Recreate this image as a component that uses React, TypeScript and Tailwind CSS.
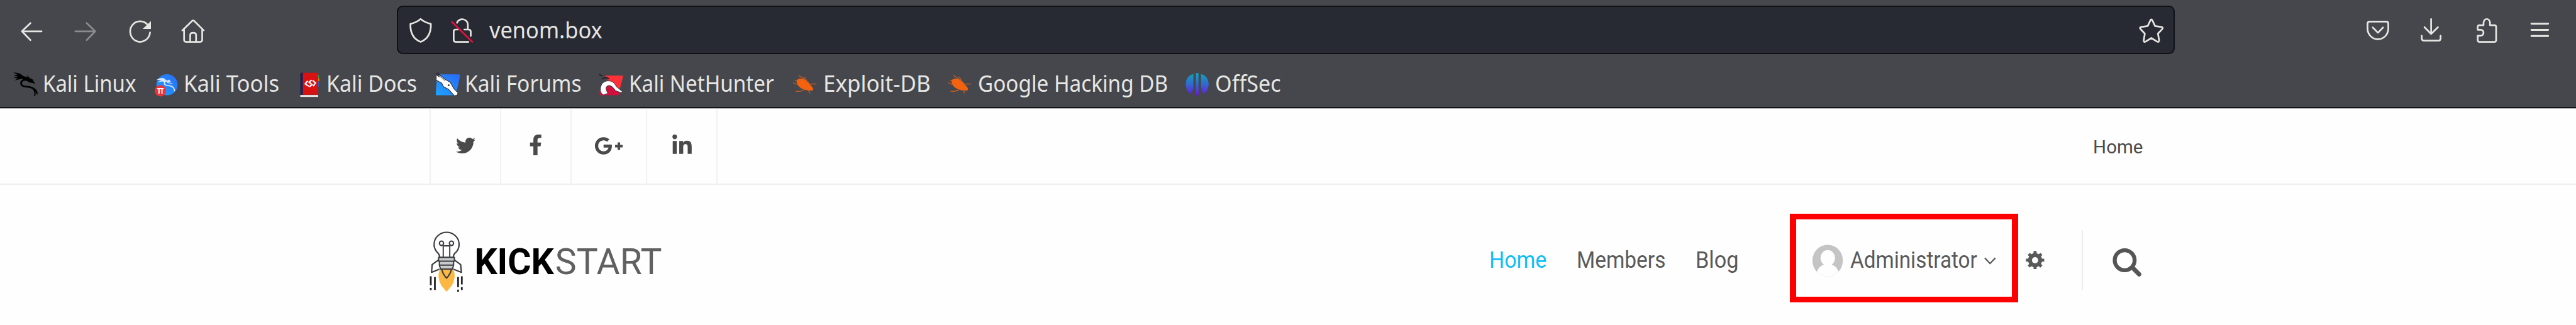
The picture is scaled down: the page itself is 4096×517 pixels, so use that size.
import type { ReactNode } from "react";
import { FaFacebookF, FaGooglePlusG, FaLinkedinIn, FaTwitter } from "react-icons/fa";

const line = {
  fill: "none",
  stroke: "#e6e6e2",
  strokeWidth: 2.9,
  strokeLinecap: "round" as const,
  strokeLinejoin: "round" as const,
};

function BackIcon() {
  return (
    <svg viewBox="0 21 96 60" className="h-[55.9px] w-[89.4px]">
      <path {...line} d="M71 53H37.5M52 39L37.5 53L52 68" />
    </svg>
  );
}

function ForwardIcon() {
  return (
    <svg viewBox="96 21 96 60" className="h-[55.9px] w-[89.4px]">
      <path {...line} stroke="#8a8b8e" d="M129 53H163M148.500 39L163 53L148.500 68" />
    </svg>
  );
}

function ReloadIcon() {
  return (
    <svg viewBox="192 21 96 60" className="h-[55.9px] w-[89.4px]">
      <path {...line} d="M252 42A17 17.500 0 1 0 256 55" />
      <path fill="#e6e6e2" d="M257.500 35.500V49H243.500Z" />
    </svg>
  );
}

function HomeIcon() {
  return (
    <svg viewBox="288 21 96 60" className="h-[55.9px] w-[89.4px]">
      <path {...line} d="M311.500 51.500L328 35.500Q330 33.500 332 35.500L348 51.500M314.500 50V67.500Q314.500 71 318 71H342Q345.500 71 345.500 67.500V50M325 71V59.500Q325 55.500 330 55.500Q335 55.500 335 59.500V71" />
    </svg>
  );
}

function ShieldIcon() {
  return (
    <svg viewBox="680 21 75 60" className="h-[55.9px] w-[69.8px]">
      <path {...line} d="M718.500 32Q725 37.500 736 40.500Q736.500 64 718.500 71Q700.500 64 701 40.500Q712 37.500 718.500 32Z" />
    </svg>
  );
}

function InsecureIcon() {
  return (
    <svg viewBox="755 21 75 60" className="h-[55.9px] w-[69.8px]">
      <path {...line} d="M781.500 38.500A9.500 9 0 0 1 800 41.500V50M783 50H779Q775.800 50 775.800 53.500V67.500Q775.800 71 779 71H801M794 50H801Q805 50 805 54V61" />
      <path {...line} stroke="#e2133f" d="M773 37L807.500 71" />
    </svg>
  );
}

function StarIcon() {
  return (
    <svg viewBox="3645 21 60 60" className="h-[55.9px] w-[55.9px]">
      <path {...line} d="M3672 34.500Q3673.800 31 3675.600 34.500L3680 44L3690.500 45.500Q3695 46.500 3692 49.500L3685 57L3687 68Q3687 72.500 3683.500 70.500L3673.800 64.500L3664 70.500Q3660.500 72.500 3660.800 68L3662.600 57L3655.500 49.500Q3652.500 46.500 3657 45.500L3667.500 44Z" />
    </svg>
  );
}

function PocketIcon() {
  return (
    <svg viewBox="4015 21 92 60" className="h-[55.9px] w-[85.6px]">
      <path {...line} d="M4047 36.500H4075.500Q4079 36.500 4079 40V49.500A17.800 18.500 0 0 1 4043.500 49.500V40Q4043.500 36.500 4047 36.500ZM4052.500 46.500L4061.300 55.500L4070 46.500" />
    </svg>
  );
}

function DownloadIcon() {
  return (
    <svg viewBox="4107 21 92 60" className="h-[55.9px] w-[85.6px]">
      <path {...line} d="M4152.800 32V57.500M4141.500 46L4152.800 57.500L4164.500 46M4136.800 60.500V65Q4136.800 69 4140.800 69H4165Q4169 69 4169 65V60.500" />
    </svg>
  );
}

function ExtensionIcon() {
  return (
    <svg viewBox="4199 21 92 60" className="h-[55.9px] w-[85.6px]">
      <path {...line} d="M4235 42.500H4242V37.500Q4243.500 32 4247.500 32Q4251.500 32 4253 37.500V42.500H4260.500Q4263.500 42.500 4263.500 45.500V68Q4263.500 71 4260.500 71H4235Q4232 71 4232 68V60.500H4237.500A5.500 5.200 0 0 0 4237.500 50.300H4232V45.500Q4232 42.500 4235 42.500Z" />
    </svg>
  );
}

function MenuIcon() {
  return (
    <svg viewBox="4291 21 92 60" className="h-[55.9px] w-[85.6px]">
      <path {...line} strokeWidth={3.2} d="M4324.500 40H4353M4324.500 50.600H4353M4324.500 61H4353" />
    </svg>
  );
}

function KaliDragon() {
  return (
    <svg viewBox="38 21 148.800 180" className="h-[55.9px] w-[46.2px]">
      <path d="M38 55Q68 53 84 68Q92 76 100 76L112 80L107 68L124 84L138 90L151 114L138 108L120 105Q104 92 94 98L84 86Q66 90 44 95Q58 86 68 84Q52 86 42 80Q56 77 64 75Q48 72 40 66Q52 67 60 65Q50 60 38 55Z" />
      <path fill="none" stroke="#000" strokeWidth="9" d="M92 92C72 102 74 123 98 126C126 128 148 132 159 158" />
      <path fill="none" stroke="#000" strokeWidth="6" d="M138 136Q154 150 148 176M152 142L162 166" />
    </svg>
  );
}

function KaliTools() {
  return (
    <svg viewBox="762 21 148.800 180" className="h-[55.9px] w-[46.2px]">
      <defs>
        <linearGradient id="tools" x1="1" y1="0" x2="0" y2="1">
          <stop offset="0" stopColor="#2a6df4" />
          <stop offset="1" stopColor="#1fa0ff" />
        </linearGradient>
      </defs>
      <circle cx="825" cy="117" r="54" fill="url(#tools)" />
      <path fill="#d6e6ff" d="M772 92Q796 76 812 86L824 96L836 90L846 104L828 104Q816 98 812 106L802 100L776 104Q788 98 796 94Z" />
      <path fill="none" stroke="#d6e6ff" strokeWidth="6" d="M814 100C806 118 822 122 838 122Q862 126 864 150" />
      <path fill="none" stroke="#b9d7ff" strokeWidth="4" d="M826 106L854 112" />
      <circle cx="791" cy="148" r="29" fill="#ee3338" />
      <path fill="none" stroke="#fff" strokeWidth="6.500" d="M774 137H808M784 137V163M799 137V163" />
    </svg>
  );
}

function KaliDocs() {
  return (
    <svg viewBox="512.500 112 45.100 60" className="h-[55.9px] w-[42px]">
      <path fill="#24a148" d="M542 127H545V133H542Z" />
      <path fill="#e07b1a" d="M542 133H545.500V138H542Z" />
      <path fill="#2c62c9" d="M542 139H545V147H542Z" />
      <path fill="#1b2152" d="M515 123.500H520V161H513V126Q513 123.500 515 123.500Z" />
      <path fill="#d81212" d="M517.500 123.500H541Q543.500 123.500 543.500 126V161H517.500Z" />
      <path fill="#e9e4e4" d="M513 161.500H543.500V164.800H513Z" />
      <path fill="none" stroke="#fff" strokeWidth="2.400" d="M525.500 137.500L521.500 142.500L527.500 146.500M534 136.500L539 141L535 146.500M532.500 136L528 139.500L533 144L528.500 147.500" />
    </svg>
  );
}

function KaliForums() {
  return (
    <svg viewBox="249 336 153.300 180" className="h-[55.9px] w-[47.6px]">
      <defs>
        <linearGradient id="forums" x1="1" y1="0" x2="0" y2="1">
          <stop offset="0" stopColor="#2a69f6" />
          <stop offset="1" stopColor="#1da4ff" />
        </linearGradient>
      </defs>
      <path fill="url(#forums)" d="M275 379H370Q378 379 376 388L356 478Q354 486 345 486H260Q251 486 252 476L258 390Z" />
      <path fill="#fff" stroke="#2a2a30" strokeWidth="3.500" strokeLinejoin="round" d="M254 380L270 392L264 374L300 404L326 420L337 438Q344 456 366 472L362 486L346 488L334 474L318 456L292 442L282 424L254 408Z" />
      <path fill="none" stroke="#2a2a30" strokeWidth="8" d="M258 372L276 388" />
      <path fill="none" stroke="#9a9a9e" strokeWidth="6" d="M268 384L300 412" />
      <circle cx="318" cy="434" r="5" fill="#444" />
    </svg>
  );
}

function KaliNetHunter() {
  return (
    <svg viewBox="1089 336 155 180" className="h-[55.9px] w-[48.1px]">
      <path fill="#ff3038" d="M1122 385H1207Q1215 385 1213 393L1194 466L1150 430Z" />
      <path fill="#d3103c" d="M1094 462L1130 430L1200 470L1190 486H1102Q1088 486 1094 462Z" />
      <path fill="none" stroke="#222226" strokeWidth="6" d="M1092 379L1108 387M1106 404Q1124 388 1142 402" />
      <path fill="#fff" stroke="#333338" strokeWidth="3" d="M1098 464Q1094 420 1132 412Q1164 408 1180 442L1210 467L1204 473L1174 462Q1158 434 1138 436Q1116 444 1136 476L1114 484Q1100 478 1098 464Z" />
    </svg>
  );
}

function BugIcon({ className }: { className: string }) {
  return (
    <svg viewBox="44 6 154 180" className={className}>
      <path fill="#f2620f" d="M64 78Q78 64 104 75L122 88L132 102L148 122L142 133L124 131Q100 130 80 116Q58 98 64 78Z" />
      <path fill="none" stroke="#c55f25" strokeWidth="4" d="M106 80Q92 64 72 54M116 90Q112 70 98 62M124 99L164 98M70 98Q54 102 45 90M66 86L54 78M100 128Q84 138 58 136M120 128L132 147" />
    </svg>
  );
}

function OffSecIcon() {
  return (
    <svg viewBox="2025 112 50.400 60" className="h-[55.9px] w-[46.9px]">
      <defs>
        <linearGradient id="offsec" gradientUnits="userSpaceOnUse" x1="0" y1="124" x2="0" y2="163">
          <stop offset="0" stopColor="#12a3bd" />
          <stop offset="0.500" stopColor="#3268cf" />
          <stop offset="1" stopColor="#6b12e6" />
        </linearGradient>
      </defs>
      <path fill="url(#offsec)" d="M2038.500 125.500V148Q2037.500 156 2033 159.500Q2025.500 153 2025.500 143Q2025.500 130 2038.500 125.500ZM2051.500 125.500V148Q2052.500 156 2057 159.500Q2064.500 153 2064.500 143Q2064.500 130 2051.500 125.500ZM2042.700 124H2047.300V161Q2045 166 2042.700 161Z" />
    </svg>
  );
}

function Bookmark({ icon, className, children }: { icon: ReactNode; className: string; children: ReactNode }) {
  return (
    <div className={`flex h-full shrink-0 items-center ${className}`}>
      <div className="shrink-0">{icon}</div>
      {children}
    </div>
  );
}

function BrowserChrome() {
  return (
    <header className="border-b-2 border-[#0f1115] bg-[#45474d] font-['Noto_Sans',sans-serif] text-[36.9px] whitespace-nowrap text-[#e6e6e2]">
      <div className="flex h-[95px] items-center">
        <BackIcon />
        <ForwardIcon />
        <ReloadIcon />
        <HomeIcon />
        <div className="ml-[273px] flex h-[77px] w-[2827px] items-center rounded-[9px] border-[2.5px] border-[#101116] bg-[#272933]">
          <ShieldIcon />
          <InsecureIcon />
          <span className="ml-[6px] origin-left scale-x-[0.932]">venom.box</span>
          <div className="mr-[6px] ml-auto">
            <StarIcon />
          </div>
        </div>
        <div className="ml-[280px] flex">
          <PocketIcon />
          <DownloadIcon />
          <ExtensionIcon />
          <MenuIcon />
        </div>
      </div>
      <nav className="flex h-[75px] items-center pl-[21.4px]">
        <Bookmark className="w-[224.4px]" icon={<KaliDragon />}>
          <span className="origin-left scale-x-[0.893]">Kali Linux</span>
        </Bookmark>
        <Bookmark className="w-[231.3px]" icon={<KaliTools />}>
          <span className="origin-left scale-x-[0.939]">Kali Tools</span>
        </Bookmark>
        <Bookmark className="w-[214.6px]" icon={<KaliDocs />}>
          <span className="origin-left scale-x-[0.919]">Kali Docs</span>
        </Bookmark>
        <Bookmark className="w-[260.6px]" icon={<KaliForums />}>
          <span className="origin-left scale-x-[0.910]">Kali Forums</span>
        </Bookmark>
        <Bookmark className="w-[309.1px]" icon={<KaliNetHunter />}>
          <span className="origin-left scale-x-[0.899]">Kali NetHunter</span>
        </Bookmark>
        <Bookmark className="w-[245.7px]" icon={<BugIcon className="h-[55.9px] w-[47.8px]" />}>
          <span className="origin-left scale-x-[0.947]">Exploit-DB</span>
        </Bookmark>
        <Bookmark className="w-[378px]" icon={<BugIcon className="h-[55.9px] w-[48.3px]" />}>
          <span className="origin-left scale-x-[0.902]">Google Hacking DB</span>
        </Bookmark>
        <Bookmark className="w-[170px]" icon={<OffSecIcon />}>
          <span className="origin-left scale-x-[0.926]">OffSec</span>
        </Bookmark>
      </nav>
    </header>
  );
}

function TopBar() {
  return (
    <div className="border-t border-b-2 border-t-[#b2b2b5] border-b-[#efefef] pt-[1px]">
      <div className="ml-[683px] flex h-[118px] w-[2724.5px] items-center text-[#4a4a4a]">
        <div className="flex h-full w-[112px] items-center justify-center border-l-2 border-[#f1f1f1] pb-[4px]">
          <FaTwitter className="h-[31px] w-[31px]" />
        </div>
        <div className="flex h-full w-[112px] items-center justify-center border-l-2 border-[#f1f1f1] pb-[5px]">
          <FaFacebookF className="h-[33.5px] w-[33.5px]" />
        </div>
        <div className="flex h-full w-[120px] items-center justify-center border-l-2 border-[#f1f1f1] pb-[3px]">
          <FaGooglePlusG className="h-[46px] w-[46px]" />
        </div>
        <div className="flex h-full w-[114px] items-center justify-center border-x-2 border-[#f1f1f1] pb-[3px]">
          <FaLinkedinIn className="h-[35px] w-[35px]" />
        </div>
        <span className="ml-auto pt-[2px] text-[29.5px]">Home</span>
      </div>
    </div>
  );
}

function Rocket() {
  const ink = { fill: "none", stroke: "#3b3c40", strokeWidth: 7, strokeLinejoin: "round" as const };
  return (
    <svg viewBox="90 66 192 330" className="mt-[11px] h-[102.4px] w-[59.6px] shrink-0">
      <path fill="#fbb944" d="M152 272H222Q238 308 214 354L187 386L160 354Q136 308 152 272Z" />
      <path {...ink} d="M152 208Q150 192 136 180A64 62 0 1 1 238 180Q222 192 221 208" />
      <path {...ink} d="M170 208V150M203 208V150" stroke="#55565a" />
      <path {...ink} d="M170 150H203" />
      <ellipse {...ink} cx="161" cy="137" rx="10.500" ry="11.500" />
      <ellipse {...ink} cx="212" cy="137" rx="10.500" ry="11.500" />
      <path {...ink} fill="#fff" d="M146 222L113 246L110 286L150 270M226 222L259 246L263 286L222 270" />
      <path {...ink} fill="#c9cacc" strokeWidth="6.500" d="M146 209H227V229H146ZM150 229H223V249H150ZM150 249H223L217 269H156Z" />
      <path {...ink} d="M162 270Q168 296 187 316Q206 296 212 270" />
      <path fill="none" stroke="#25262c" strokeWidth="9" d="M106 306V352M127 310V376M246 310V362M265 306V348" />
      <path fill="none" stroke="#25262c" strokeWidth="9" d="M106 366V377M246 375V385M265 362V376" />
    </svg>
  );
}

function Avatar() {
  return (
    <svg viewBox="3090 410 64 64" className="mt-[2px] h-[59.6px] w-[59.6px] shrink-0">
      <defs>
        <clipPath id="face">
          <ellipse cx="3122.300" cy="445" rx="26" ry="27" />
        </clipPath>
      </defs>
      <g clipPath="url(#face)">
        <path fill="#c4c4c4" d="M3090 410H3154V474H3090Z" />
        <ellipse cx="3122.500" cy="440.500" rx="12.300" ry="13.500" fill="#fefefe" />
        <path fill="#fefefe" d="M3116 448V452Q3104 455 3102 474H3143Q3141 455 3129 452V448Z" />
      </g>
    </svg>
  );
}

function Gear() {
  return (
    <svg viewBox="-16 -16 32 32" className="mt-[6px] h-[29.8px] w-[29.8px]" fill="none" stroke="#595959">
      <circle r="8.600" strokeWidth="6.600" />
      <path strokeWidth="5.200" d="M0 -15.600V-9M0 9V15.600M-15.600 0H-9M9 0H15.600M-10.800 -10.800L-7 -7M7 7L10.800 10.800M-10.800 10.800L-7 7M7 -7L10.800 -10.800" />
    </svg>
  );
}

function MainHeader() {
  return (
    <div className="flex h-[141px] items-center text-[36.7px] text-[#595959]">
      <div className="ml-[679.6px] flex w-[1688.7px] shrink-0 items-center">
        <Rocket />
        <div className="mt-[12px] ml-[15.2px] flex text-[57px]">
          <span className="font-bold text-black">KICK</span>
          <span className="ml-[2px] text-[#606060]">START</span>
        </div>
      </div>
      <nav className="flex shrink-0 pt-[6px]">
        <div className="w-[138.5px]">
          <a className="inline-block origin-left scale-x-[0.925] text-[#10bff5]">Home</a>
        </div>
        <div className="w-[188.8px]">
          <a className="inline-block origin-left scale-x-[0.912]">Members</a>
        </div>
        <div className="w-[150.2px]">
          <a className="inline-block origin-left scale-x-[0.935]">Blog</a>
        </div>
      </nav>
      <div className="flex h-[141.5px] w-[363px] shrink-0 items-center border-x-[10px] border-y-[9.4px] border-[#ff0000] pl-[20.7px]">
        <Avatar />
        <div className="ml-[6px] w-[213px] shrink-0 pt-[6px]">
          <span className="inline-block origin-left scale-x-[0.907]">Administrator</span>
        </div>
        <svg viewBox="0 0 20 13" className="mt-[9px] h-[12px] w-[18.6px] shrink-0" fill="none" stroke="#595959" strokeWidth="2.400">
          <path d="M1 1.500L10 11L19 1.500" />
        </svg>
      </div>
      <div className="ml-[12.5px] flex shrink-0 items-center">
        <Gear />
        <div className="mt-[6px] ml-[59px] h-[96px] w-[2px] bg-[#ececec]" />
        <svg viewBox="3608 423 50 50" className="mt-[14px] ml-[47px] h-[46.5px] w-[46.5px]" fill="none" stroke="#555" strokeLinecap="round">
          <circle cx="3628.800" cy="444.500" r="17" strokeWidth="6.800" />
          <path strokeWidth="7.500" d="M3642.500 457.500L3653.500 468.500" />
        </svg>
      </div>
    </div>
  );
}

export default function App() {
  return (
    <div className="h-[517px] w-[4096px] overflow-hidden bg-[#fefefe] font-['Roboto',sans-serif] whitespace-nowrap">
      <BrowserChrome />
      <TopBar />
      <div className="pt-[46px]">
        <MainHeader />
      </div>
    </div>
  );
}
